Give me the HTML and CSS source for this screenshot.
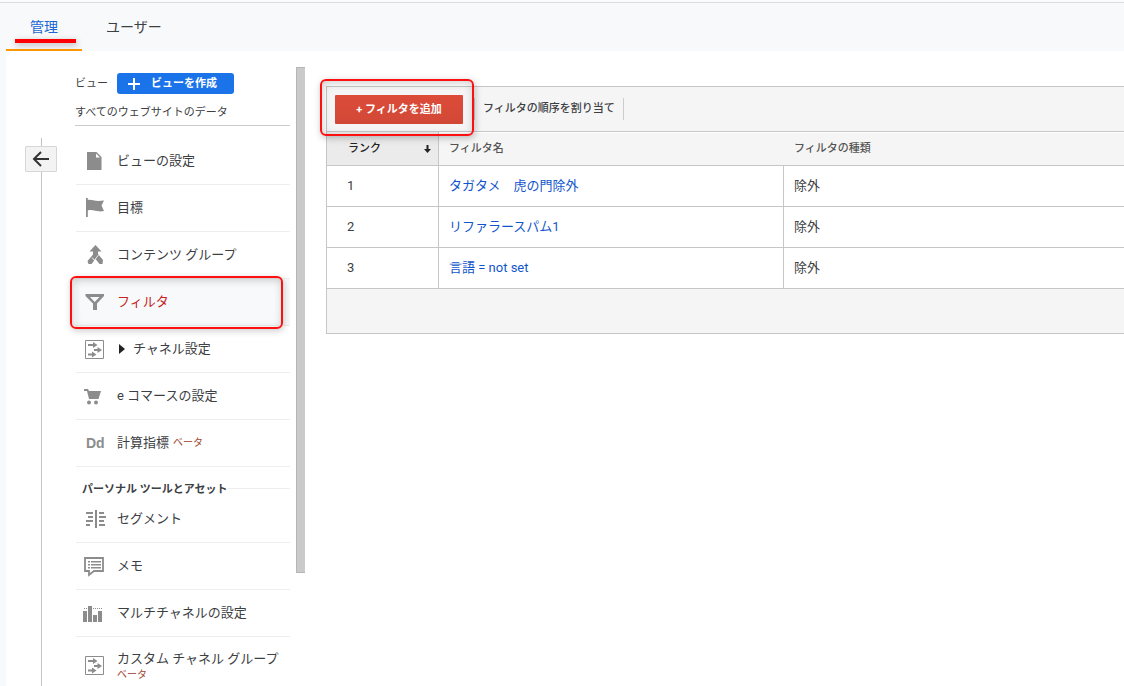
FILE: index.html
```html
<!DOCTYPE html>
<html lang="ja">
<head>
<meta charset="utf-8">
<meta name="viewport" content="width=device-width, initial-scale=1">
<title>管理 - フィルタ</title>
<link rel="stylesheet" href="styles.css">
</head>
<body>
<svg class="sprite" aria-hidden="true">
  <symbol id="channels" viewBox="0 0 20 20">
    <path d="M.5 1.500h18v18H.5z" fill="#fff" stroke="#8c8c8c"/>
    <path d="M3 5h5V3l4.500 3L8 9V7H3zM9 10h3.500V8l4.500 3-4.500 3v-2H9zM3 14.500h4V12.500l4.500 3L7 18.500V16.500H3z"/>
  </symbol>
</svg>
<header class="topbar">
  <nav class="tabs">
    <a class="tab tab-active" href="#admin">管理</a>
    <a class="tab" href="#user">ユーザー</a>
  </nav>
</header>
<div class="workspace">
  <div class="rail">
    <button class="back" type="button" aria-label="戻る">
      <svg width="18" height="18" viewBox="0 0 18 18"><path d="M17 9H2M9 2L2 9l7 7" fill="none" stroke="#333" stroke-width="2"/></svg>
    </button>
  </div>
  <aside class="sidebar">
    <div class="view-row">
      <span>ビュー</span>
      <button class="create" type="button">
        <svg width="14" height="14" viewBox="0 0 14 14"><path d="M7 1v12M1 7h12" stroke="#fff" stroke-width="2"/></svg>
        ビューを作成
      </button>
    </div>
    <div class="view-name">すべてのウェブサイトのデータ</div>
    <ul class="menu">
      <li><a class="item" href="#view"><svg class="icon" viewBox="0 0 20 20"><path d="M2 1h9.500l5 5v13H2z"/><path d="M11 2.500v4h4z" fill="#fff"/></svg>ビューの設定</a></li>
      <li><a class="item" href="#goals"><svg class="icon" viewBox="0 0 20 20"><path d="M1 0h1.800v2C7 1 9 4 19 2.500L16.500 7.500 19 13C12 14.500 8 11 2.800 12.500V19H1z"/></svg>目標</a></li>
      <li><a class="item" href="#content"><svg class="icon" viewBox="0 0 20 20"><path d="M10.500 0l6 6.500h-3.500V9l5 6-.5 4h-3l-4-5-4 5H3.500l-1-3L8 9.500v-3H4.500z"/><path d="M7 12.500l4 5M13.500 10l-4 5" stroke="#fff" stroke-width=".8"/></svg>コンテンツ グループ</a></li>
      <li class="marked"><a class="item item-current" href="#filters"><svg class="icon" viewBox="0 0 20 20"><path fill-rule="evenodd" d="M.5 2h18.500v2L12 11.500V18H8v-6.500L.5 4zM5 5l4.700 5L14.500 5z"/></svg>フィルタ</a></li>
      <li><a class="item" href="#channels-view"><svg class="icon"><use href="#channels"/></svg><svg class="caret" viewBox="0 0 6 10"><path d="M0 0l6 5-6 5z"/></svg>チャネル設定</a></li>
      <li><a class="item" href="#commerce"><svg class="icon" viewBox="0 0 20 20"><path d="M-1 3h4l1 2h12L13.500 13H4L2 5H-1z"/><circle cx="4" cy="16.500" r="2"/><circle cx="11" cy="16.500" r="2"/></svg>e コマースの設定</a></li>
      <li><a class="item" href="#metrics"><span class="icon glyph" aria-hidden="true">Dd</span>計算指標<small class="beta">ベータ</small></a></li>
    </ul>
    <h2 class="section"><span>パーソナル ツールとアセット</span></h2>
    <ul class="menu">
      <li><a class="item" href="#segments"><svg class="icon" viewBox="0 0 20 20"><path d="M1 3h7v2H1zM3 7h5v2H3zM1 11h7v2H1zM1 15h4v2H1zM10 1h2v18h-2zM14 3h5v2h-5zM14 7h7v2h-7zM14 11h5v2h-5zM14 15h6v2h-6z"/></svg>セグメント</a></li>
      <li><a class="item" href="#notes"><svg class="icon" viewBox="0 0 20 20"><path d="M0 2h18v13H9l-5 4v-4H0z" fill="none" stroke="#8c8c8c" stroke-width="1.800"/><path d="M3 5h2v1.500H3zM6 5h10v1.500H6zM3 8h2v1.500H3zM6 8h10v1.500H6zM3 11h2v1.500H3zM6 11h10v1.500H6z"/></svg>メモ</a></li>
      <li><a class="item" href="#multi"><svg class="icon" viewBox="0 0 20 20"><path d="M-2 8h4v11h-4zM3 3h4v16H3zM8 12h4v7H8zM13 8h4v11h-4z"/><path d="M-1 5.500h3M8 5.500h9" stroke="#8c8c8c" stroke-dasharray="1 1"/></svg>マルチチャネルの設定</a></li>
      <li><a class="item item-tall" href="#custom"><svg class="icon"><use href="#channels"/></svg><span class="stack">カスタム チャネル グループ<small class="beta">ベータ</small></span></a></li>
    </ul>
  </aside>
  <div class="scroll-thumb"></div>
  <main class="panel">
    <div class="toolbar">
      <span class="add-wrap"><button class="add" type="button">+ フィルタを追加</button></span>
      <button class="assign" type="button">フィルタの順序を割り当て</button>
    </div>
    <table class="filters">
      <thead>
        <tr>
          <th class="rank" aria-sort="ascending"><span class="sort">ランク<svg width="7" height="8" viewBox="0 0 7 8"><path d="M2.500 0h2v4H7L3.500 8 0 4h2.500z" fill="#222"/></svg></span></th>
          <th class="name">フィルタ名</th>
          <th>フィルタの種類</th>
        </tr>
      </thead>
      <tbody>
        <tr><td>1</td><td><a href="#f1">タガタメ　虎の門除外</a></td><td>除外</td></tr>
        <tr><td>2</td><td><a href="#f2">リファラースパム1</a></td><td>除外</td></tr>
        <tr><td>3</td><td><a href="#f3">言語 = not set</a></td><td>除外</td></tr>
      </tbody>
    </table>
    <div class="panel-foot"></div>
  </main>
</div>
</body>
</html>
```
FILE: styles.css
```css
* { box-sizing: border-box; }
body {
  margin: 0;
  background: #fff;
  color: #3c4043;
  font: 13px/20px Roboto, "Noto Sans CJK JP", sans-serif;
}
button { font: inherit; color: inherit; cursor: pointer; }
a { text-decoration: none; }
.sprite { display: none; }

.topbar {
  height: 51px;
  padding: 0 6px;
  background: #f8f9fb;
  box-shadow: inset 0 2px #fbfbfc, inset 0 3px #dadce0;
}
.tabs { display: flex; height: 100%; }
.tab {
  position: relative;
  padding: 17px 24px 0;
  color: #3c4043;
  font-size: 14px;
}
.tab-active {
  border-bottom: 2px solid #ff9800;
  color: #1967d2;
}
.tab-active::after {
  content: "";
  position: absolute;
  inset: 39px 6px auto 9px;
  height: 4px;
  background: #ff0000;
  box-shadow: 1px 2px 6px rgba(0, 0, 0, .3);
}

.workspace {
  display: flex;
  min-height: calc(100vh - 51px);
  border-left: 6px solid #f8f9fb;
}
.rail {
  flex: none;
  width: 69px;
  margin-top: 87px;
  padding: 8px 0 0 19px;
  background: linear-gradient(#c4c4c4, #c4c4c4) 35px 0 / 1px 100% no-repeat;
}
.back {
  display: grid;
  place-items: center;
  width: 32px;
  height: 26px;
  padding: 0;
  border: 1px solid #d6d6d6;
  border-radius: 1px;
  background: #f3f3f3;
}

.sidebar {
  flex: none;
  width: 215px;
  padding-top: 22px;
}
.view-row {
  display: flex;
  align-items: center;
  gap: 9px;
  font-size: 11px;
}
.create {
  display: flex;
  align-items: center;
  gap: 10px;
  height: 21px;
  padding: 0 17px 0 10px;
  border: 0;
  border-radius: 3px;
  background: #1a73e8;
  color: #fff;
  font-weight: 700;
}
.view-name {
  padding: 9px 0 2px;
  border-bottom: 1px solid #ccc;
  font-size: 11px;
}
.menu {
  margin: 0;
  padding: 0 0 0 1px;
  list-style: none;
}
.view-name + .menu { padding-top: 12px; }
.item {
  display: flex;
  align-items: center;
  height: 47px;
  padding: 0 0 1px 9px;
  border-bottom: 1px solid #eee;
  color: #3c4043;
}
.item-tall {
  height: 48px;
  padding: 8px 0 0 9px;
  border-bottom: 0;
}
.icon {
  flex: none;
  width: 20px;
  height: 20px;
  margin-right: 12px;
  fill: #8c8c8c;
  overflow: visible;
}
.glyph {
  color: #8c8c8c;
  font: 700 14px/20px "Liberation Sans", sans-serif;
  padding-left: 1px;
}
.caret { width: 6px; height: 10px; margin: 0 8px 0 2px; fill: #222; }
.beta { margin-left: 4px; color: #a0452e; font-size: 10px; line-height: 12px; }
.stack { display: flex; flex-direction: column; white-space: nowrap; }
.stack .beta { margin-left: 0; }
.marked { position: relative; }
.marked::after {
  content: "";
  position: absolute;
  inset: -3px 7px -3px -6px;
  border: 2px solid #ff1010;
  border-radius: 6px;
  box-shadow: 1px 2px 7px rgba(0, 0, 0, .2), inset 1px 2px 8px rgba(0, 0, 0, .2);
  pointer-events: none;
}
.item-current { background: #f8f9fb; color: #c5221f; }
.section {
  display: flex;
  align-items: center;
  margin: 0 0 0 1px;
  padding: 14px 0 0 6px;
  font-size: 11px;
  line-height: 12px;
  font-weight: 700;
}
.section span { padding-top: 3px; }
.section::after { content: ""; flex: 1; height: 1px; background: #eee; }

.scroll-thumb {
  flex: none;
  width: 9px;
  margin: 16px 0 113px 6px;
  border: 1px solid #b6b6b6;
  border-right: 0;
  background: #cacaca;
}

.panel {
  flex: 1;
  min-width: 0;
  align-self: flex-start;
  margin: 35px 0 0 21px;
  border: 1px solid #c6c6c6;
  border-right: 0;
}
.toolbar {
  display: flex;
  align-items: center;
  height: 45px;
  padding-left: 8px;
  border-bottom: 1px solid #c6c6c6;
  background: #f5f5f5;
  font-size: 11px;
  font-weight: 700;
}
.add-wrap { position: relative; margin-right: 11px; }
.add-wrap::after {
  content: "";
  position: absolute;
  inset: -16px -11px -12px -15px;
  border: 2px solid #ff1010;
  border-radius: 6px;
  box-shadow: 1px 2px 7px rgba(0, 0, 0, .25), inset 1px 2px 8px rgba(0, 0, 0, .2);
  pointer-events: none;
}
.add {
  display: block;
  width: 128px;
  height: 29px;
  padding: 1px 0 0;
  border: 0;
  border-radius: 1px;
  background: linear-gradient(#dd4b39, #d14836);
  color: #fff;
}
.assign {
  height: 22px;
  padding: 0 8px;
  border: solid #ccc;
  border-width: 0 1px;
  background: none;
  font-weight: 500;
}
.filters {
  width: 100%;
  table-layout: fixed;
  border-spacing: 0;
}
.filters th {
  height: 34px;
  padding: 1px 10px 0;
  border-bottom: 1px solid #c6c6c6;
  background: #f5f5f5;
  box-shadow: inset 0 1px #fff;
  color: #555;
  font-size: 11px;
  font-weight: 500;
  text-align: left;
}
.filters .rank {
  width: 112px;
  padding: 1px 7px 0 21px;
  border-right: 1px solid #c6c6c6;
  background: #ebebeb;
  box-shadow: none;
  color: #222;
}
.filters .name { width: 345px; }
.sort { display: flex; align-items: center; justify-content: space-between; }
.filters td {
  height: 41px;
  padding: 0 10px;
  border-right: 1px solid #c6c6c6;
  border-bottom: 1px solid #c6c6c6;
}
.filters td:first-child { padding-left: 20px; }
.filters td:last-child { border-right: 0; }
.filters a { color: #1155cc; }
.panel-foot { height: 44px; background: #f5f5f5; }
```
